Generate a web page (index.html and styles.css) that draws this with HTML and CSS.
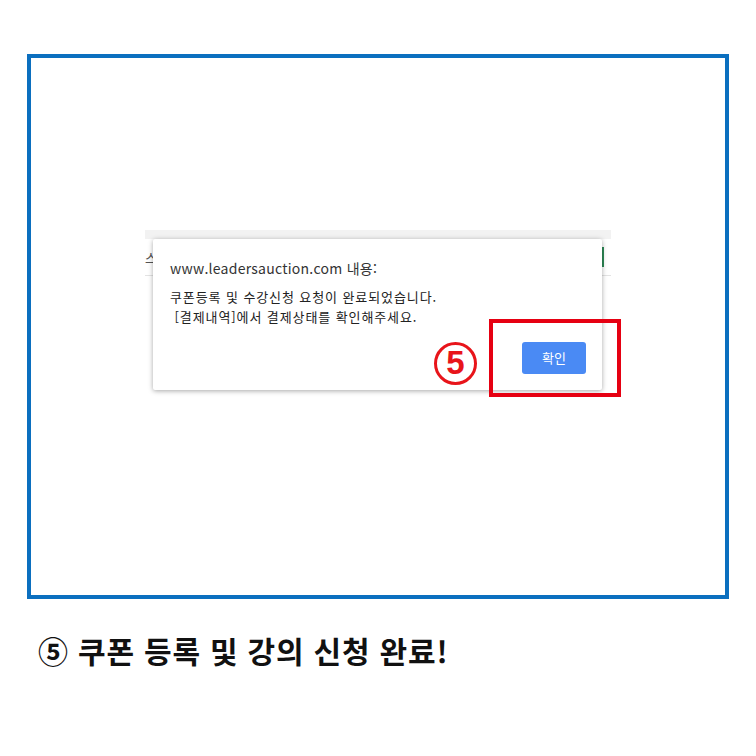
FILE: index.html
```html
<!DOCTYPE html>
<html lang="ko">
<head>
	<meta charset="UTF-8">
	<title>쿠폰 등록 완료</title>
	<link rel="stylesheet" href="styles.css">
</head>
<body>
	<div class="frame">
		<!-- 뒤쪽 페이지 일부 -->
		<div class="page">
			<div class="page-bar"></div>
			<div class="page-row">
				<span class="page-label">스</span>
				<span class="page-btn"></span>
			</div>
		</div>

		<!-- 알림창 -->
		<div class="dialog">
			<p class="dialog-title">www.leadersauction.com 내용:</p>
			<p class="dialog-msg">쿠폰등록 및 수강신청 요청이 완료되었습니다.<br>&nbsp;[결제내역]에서 결제상태를 확인해주세요.</p>
			<div class="dialog-foot">
				<a href="javascript:void(0)" class="btn-ok">확인</a>
			</div>
		</div>

		<span class="step">5</span>
		<div class="mark"></div>
	</div>

	<h2 class="caption">⑤ 쿠폰 등록 및 강의 신청 완료!</h2>
</body>
</html>
```

FILE: styles.css
```css
*{
	margin: 0;
	padding: 0;
	box-sizing: border-box;
}

body{
	background: #fff;
	font-family: "Noto Sans CJK KR", "Noto Sans", sans-serif;
	color: #222;
}

a{
	text-decoration: none;
}

.frame{
	position: relative;
	width: 702px;
	height: 545px;
	margin: 54px 0 0 27px;
	border: 4px solid #0b6fbf;
	padding: 172px 0 0 114px;
}

.page{
	width: 466px;
}

.page-bar{
	height: 9px;
	background: #f2f2f2;
}

.page-row{
	display: flex;
	justify-content: space-between;
	align-items: center;
	height: 37px;
	border-bottom: 1px solid #e3e3e3;
	font-size: 13px;
	color: #555;
}

.page-label{
	line-height: 1;
}

.page-btn{
	width: 10px;
	height: 20px;
	border-right: 2px solid #2e8b57;
	margin-right: 7px;
}

.dialog{
	position: absolute;
	left: 122px;
	top: 181px;
	width: 449px;
	height: 151px;
	background: #fff;
	border-radius: 2px;
	box-shadow: 0 1px 5px rgba(0,0,0,.35);
	padding: 19px 16px 16px 17px;
}

.dialog-title{
	font-size: 14px;
	line-height: 20px;
	letter-spacing: 0.25px;
	color: #333;
	margin-bottom: 9px;
}

.dialog-msg{
	font-size: 13px;
	line-height: 20px;
	letter-spacing: 0.9px;
	color: #222;
}

.dialog-foot{
	display: flex;
	justify-content: flex-end;
	margin-top: 15px;
}

.btn-ok{
	display: block;
	width: 64px;
	height: 32px;
	line-height: 32px;
	text-align: center;
	background: #4a8af4;
	border-radius: 3px;
	color: #fff;
	font-size: 13px;
}

.step{
	position: absolute;
	left: 403px;
	top: 284px;
	width: 43px;
	height: 43px;
	border: 3.5px solid #e8141a;
	border-radius: 50%;
	color: #e8141a;
	font-family: "Liberation Sans", sans-serif;
	font-weight: bold;
	font-size: 33px;
	line-height: 36px;
	text-align: center;
}

.mark{
	position: absolute;
	left: 458px;
	top: 261px;
	width: 132px;
	height: 78px;
	border: 4px solid #e60012;
}

.caption{
	margin: 31px 0 0 38px;
	font-size: 30px;
	line-height: 40px;
	letter-spacing: 0.8px;
	font-weight: bold;
	color: #111;
}
```
